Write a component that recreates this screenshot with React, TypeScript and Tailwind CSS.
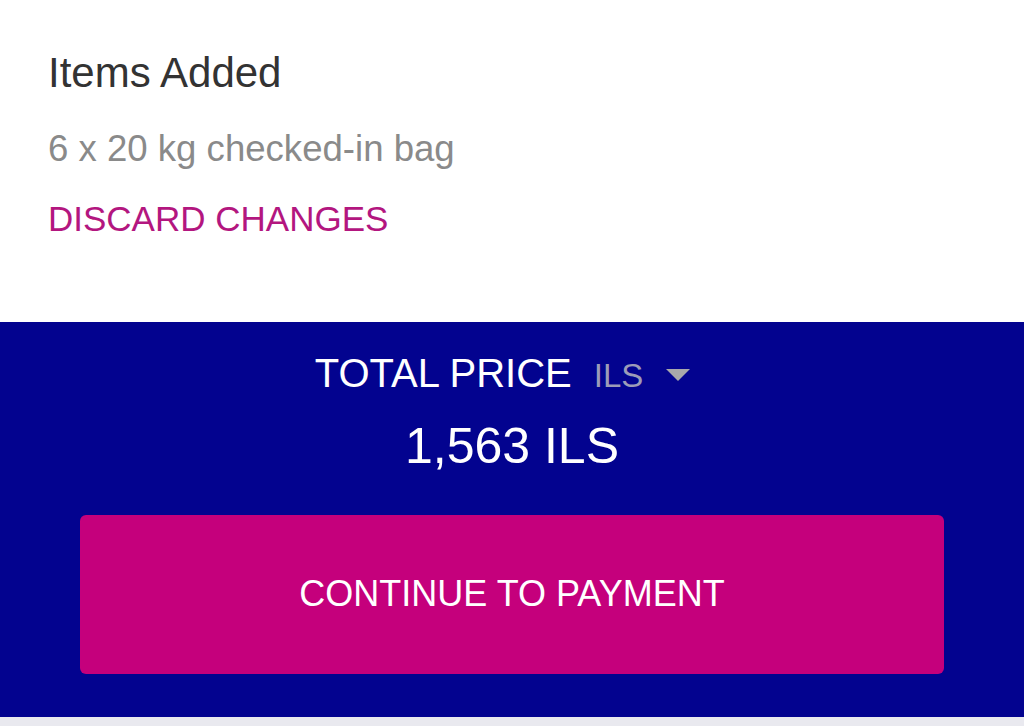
const App = () => {
  return (
    <div
      className="w-[1024px] h-[726px] flex flex-col bg-white overflow-hidden"
      style={{ fontFamily: '"Liberation Sans", Arial, sans-serif' }}
    >
      {/* added items */}
      <div className="h-[322px] px-12 pt-[49px]">
        <div className="text-[42px] leading-[48px] text-[#333333]">Items Added</div>
        <div className="mt-[31px] text-[36.6px] leading-[42px] text-[#8a8a8a]">
          6 x 20 kg checked-in bag
        </div>
        <button
          type="button"
          className="mt-[28px] block text-[35px] leading-[42px] text-[#b3167f]"
        >
          DISCARD CHANGES
        </button>
      </div>

      {/* total + payment */}
      <div className="flex-1 bg-[#03038f] flex flex-col items-center">
        <div className="mt-[28px] mr-[18px] flex items-baseline gap-[22px] text-white">
          <span className="text-[40px] leading-[46px]">TOTAL PRICE</span>
          <span className="flex items-center gap-[22px] text-[33px] text-[#9c9cb8]">
            ILS
            <svg width="26" height="14" viewBox="0 0 26 14" className="mb-[2px]">
              <polygon points="1,1 25,1 13,13" fill="#a8a8ab" />
            </svg>
          </span>
        </div>
        <div className="mt-[16px] text-[50px] leading-[58px] text-white">1,563 ILS</div>
        <button
          type="button"
          className="mt-[40px] w-[864px] h-[159px] rounded-md bg-[#c5007c] text-white text-[36px] flex items-center justify-center"
        >
          CONTINUE TO PAYMENT
        </button>
      </div>

      <div className="h-[9px] bg-[#e9e9ef]" />
    </div>
  );
};

export default App;
